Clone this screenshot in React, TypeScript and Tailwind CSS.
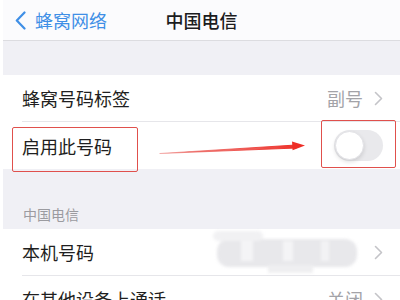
import React from "react";

const font = { fontFamily: '"Noto Sans CJK SC", "Noto Sans", sans-serif' };

const Chevron: React.FC = () => (
  <svg width="9" height="15" viewBox="0 0 9 15" className="shrink-0">
    <polyline points="1.5,1.5 7.5,7.5 1.5,13.5" fill="none" stroke="#c4c4c8" strokeWidth="1.6" strokeLinecap="round" strokeLinejoin="round" />
  </svg>
);

const Row: React.FC<{ label: string; children?: React.ReactNode; className?: string }> = ({ label, children, className }) => (
  <div className={"flex items-center bg-white pl-[19px] pr-[17px] " + (className ?? "")}>
    <span className="text-[18px] leading-none text-[#1f1f21]">{label}</span>
    <div className="ml-auto flex items-center gap-[11px]">{children}</div>
  </div>
);

const Sep: React.FC = () => (
  <div className="bg-white pl-[19px]">
    <div className="h-px bg-[#e6e6ea]"></div>
  </div>
);

export default function App() {
  return (
    <div className="relative w-[400px] h-[300px] overflow-hidden bg-white pl-[3px]" style={font}>
      {/* nav bar */}
      <div className="grid grid-cols-[1fr_auto_1fr] items-center h-[41px] bg-[#fbfbfd] border-b border-[#dcdce0]">
        <div className="flex items-center pl-[12px] gap-[9px]">
          <svg width="11" height="19" viewBox="0 0 11 19">
            <polyline points="9.5,1.5 1.8,9.5 9.5,17.5" fill="none" stroke="#3f8fe6" strokeWidth="2.2" strokeLinecap="round" strokeLinejoin="round" />
          </svg>
          <span className="text-[18px] leading-none text-[#3f8fe6]">蜂窝网络</span>
        </div>
        <span className="text-[18px] leading-none font-medium text-[#1c1c1e]">中国电信</span>
        <div></div>
      </div>

      <div className="h-[34px] bg-[#f0f0f5]"></div>

      <Row label="蜂窝号码标签" className="h-[46px]">
        <span className="text-[18px] leading-none text-[#a3a3a8]">副号</span>
        <Chevron />
      </Row>
      <Sep />
      <Row label="启用此号码" className="h-[47px] pr-[14px]">
        <div className="relative w-[49px] h-[31px] rounded-full bg-[#e9e9ec]">
          <div className="absolute left-[1px] top-[1px] w-[29px] h-[29px] rounded-full bg-white border border-[#e2e2e6] shadow-[0_2px_4px_rgba(0,0,0,0.12)]"></div>
        </div>
      </Row>

      <div className="h-[60px] bg-[#f0f0f5] flex items-end pl-[20px] pb-[8px]">
        <span className="text-[14px] leading-none text-[#9b9ba0]">中国电信</span>
      </div>

      <Row label="本机号码" className="h-[46px]">
        <div className="relative w-[150px] h-[46px] blur-[1.5px]">
          <div className="absolute left-[4px] top-[10px] w-[140px] h-[28px] rounded-[12px] bg-[#e8e8eb]"></div>
          <div className="absolute left-[0px] top-[2px] w-[50px] h-[10px] rounded-[6px] bg-[#f1f1f3]"></div>
          <div className="absolute left-[28px] top-[12px] w-[12px] h-[20px] bg-[#f4f4f6]"></div>
          <div className="absolute left-[70px] top-[12px] w-[10px] h-[20px] bg-[#f4f4f6]"></div>
          <div className="absolute left-[108px] top-[12px] w-[8px] h-[20px] bg-[#f2f2f4]"></div>
          <div className="absolute left-[55px] top-[36px] w-[45px] h-[8px] bg-[#efeff1]"></div>
        </div>
        <Chevron />
      </Row>
      <Sep />
      <Row label="在其他设备上通话" className="h-[46px]">
        <span className="text-[18px] leading-none text-[#a3a3a8]">关闭</span>
        <Chevron />
      </Row>

      {/* annotations */}
      <div className="absolute left-[12px] top-[127px] w-[126px] h-[45px] border-[1.5px] border-[#e0504c] rounded-[2px]"></div>
      <div className="absolute left-[321px] top-[120px] w-[75px] h-[48px] border-[1.5px] border-[#e0504c] rounded-[2px]"></div>
      <svg className="absolute left-0 top-0" width="400" height="300" viewBox="0 0 400 300">
        <defs>
          <linearGradient id="ar" x1="160" y1="0" x2="300" y2="0" gradientUnits="userSpaceOnUse">
            <stop offset="0" stopColor="#e85a55" stopOpacity="0.5" />
            <stop offset="1" stopColor="#ee2d26" />
          </linearGradient>
        </defs>
        <path d="M160 153.5 L296 145 L296 148 Z" fill="url(#ar)" stroke="url(#ar)" strokeWidth="1.2" strokeLinejoin="round" />
        <polygon points="292,141.5 305,145.6 292.6,150.3" fill="#ee2d26" />
      </svg>
    </div>
  );
}
